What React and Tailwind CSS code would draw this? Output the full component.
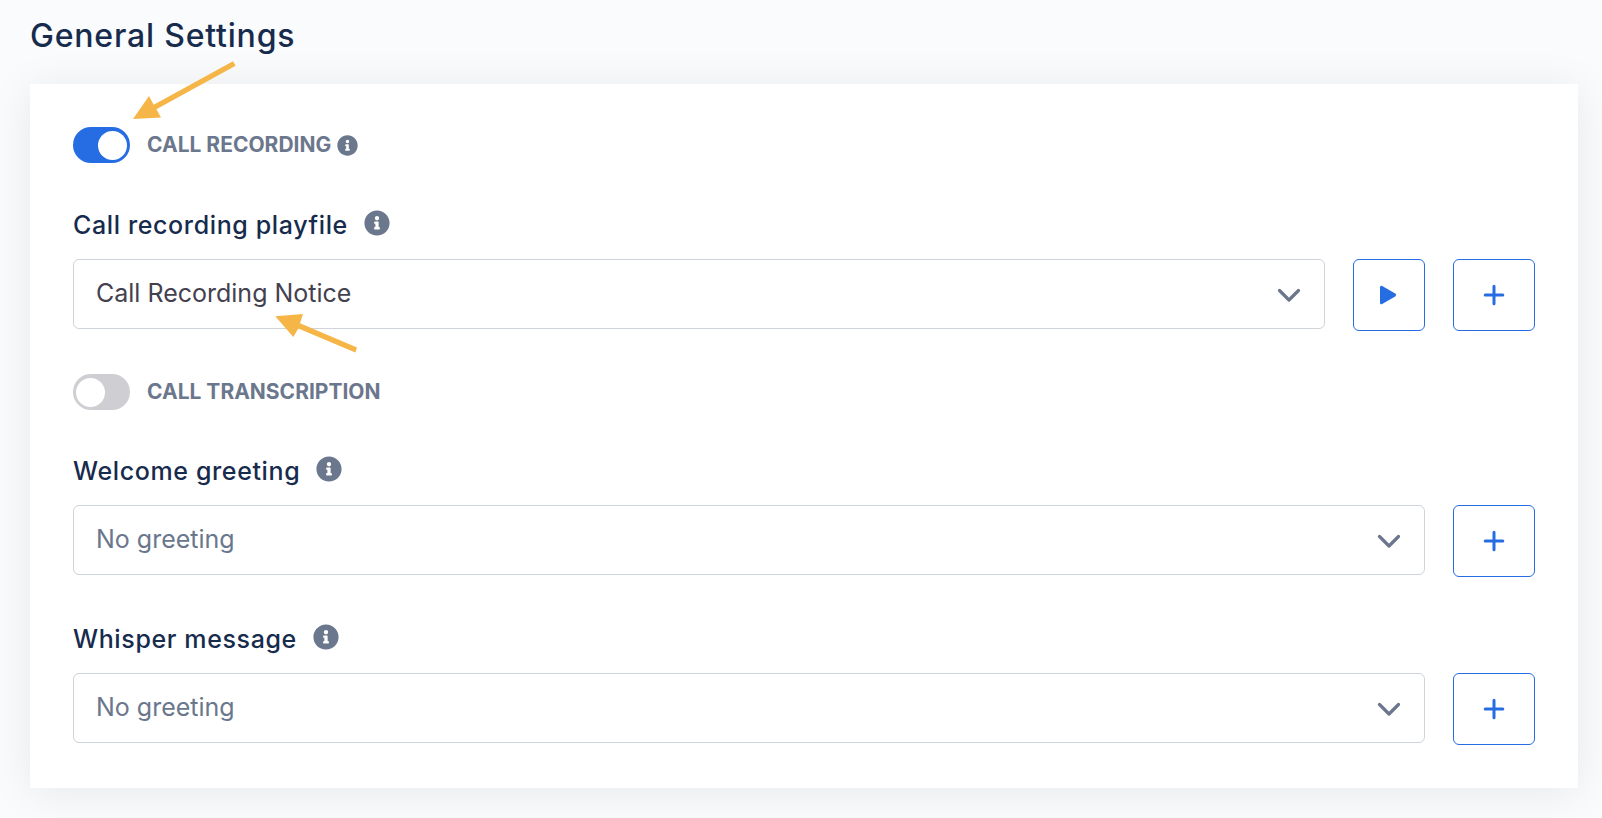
import React, { useState } from "react"
import { FaInfoCircle } from "react-icons/fa"

const Toggle = ({ id, checked, onChange }) => (
  <span className="relative block w-[57px] h-9 shrink-0">
    <input
      id={id}
      type="checkbox"
      role="switch"
      checked={checked}
      onChange={(e) => onChange(e.target.checked)}
      className="peer appearance-none block w-full h-full rounded-full bg-[#cfced3] checked:bg-[#266ce2] transition-colors cursor-pointer"
    />
    <span className="absolute top-1 left-[3px] w-[29px] h-[29px] rounded-full bg-white pointer-events-none transition-transform peer-checked:translate-x-[22px]" />
  </span>
)

const PlusIcon = () => (
  <svg className="w-6 h-6" viewBox="0 0 24 24" fill="none" stroke="currentColor" strokeWidth="3" strokeLinecap="round">
    <path d="M12 3.2v17.600M3.200 12h17.600" />
  </svg>
)

const PlayIcon = () => (
  <svg className="w-6 h-6" viewBox="0 0 24 24" fill="currentColor">
    <path d="M3 4.2v15.6c0 1.2 1.2 1.9 2.2 1.3l13-7.7c1.1-.6 1.1-2.2 0-2.8l-13-7.7C4.200 2.300 3 3 3 4.200z" />
  </svg>
)

const IconButton = ({ label, className, children }) => (
  <button
    type="button"
    aria-label={label}
    className={`h-[72px] shrink-0 flex items-center justify-center rounded-md border border-[#266ce2] text-[#266ce2] bg-white hover:bg-blue-50 transition-colors ${className}`}
  >
    {children}
  </button>
)

const Field = ({ id, label, options, muted, playable, className }) => {
  const [value, setValue] = useState(options[0])

  return (
    <div className={className}>
      <div className="flex items-start gap-4 mb-[18px]">
        <label htmlFor={id} className="text-[25px] leading-8 font-medium tracking-wide text-[#172b4d]">
          {label}
        </label>
        <FaInfoCircle className="w-[26px] h-[26px] mt-px text-[#6b778c]" />
      </div>
      <div className="flex items-start gap-7">
        <div className="relative flex-1">
          <select
            id={id}
            value={value}
            onChange={(e) => setValue(e.target.value)}
            className={`appearance-none block w-full h-[70px] pl-[22px] pr-16 rounded-md border border-[#ced4da] bg-white text-[25px] focus:outline-none focus:border-[#266ce2] ${
              muted ? "text-[#6b778c]" : "text-[#44414f]"
            }`}
          >
            {options.map((option) => (
              <option key={option}>{option}</option>
            ))}
          </select>
          <svg
            className="absolute right-6 top-6 w-6 h-6 text-[#6b778c] pointer-events-none"
            viewBox="0 0 24 24"
            fill="none"
            stroke="currentColor"
            strokeWidth="3.2"
            strokeLinecap="round"
            strokeLinejoin="round"
          >
            <path d="M2.500 7.500l9.500 9.500 9.500-9.500" />
          </svg>
        </div>
        {playable && (
          <IconButton label="Play" className="w-[72px]">
            <PlayIcon />
          </IconButton>
        )}
        <IconButton label="Add" className="w-[82px]">
          <PlusIcon />
        </IconButton>
      </div>
    </div>
  )
}

const App = () => {
  const [recording, setRecording] = useState(true)
  const [transcription, setTranscription] = useState(false)

  return (
    <main className="relative min-h-screen bg-[#fafbfd] pl-[30px] pr-6 pt-4 pb-[30px] font-['Inter',sans-serif]">
      <h1 className="text-[32px] leading-10 font-medium tracking-wide text-[#172b4d] mb-7">General Settings</h1>

      <section className="bg-white px-[43px] py-[43px] shadow-[0_4px_40px_rgba(0,0,0,0.08)]">
        {/* Call recording */}
        <div className="flex items-center mb-[46px]">
          <Toggle id="recording" checked={recording} onChange={setRecording} />
          <label htmlFor="recording" className="ml-[17px] mr-1.5 text-[21px] leading-8 font-bold text-[#6b778c]">
            CALL RECORDING
          </label>
          <FaInfoCircle className="w-[21px] h-[21px] text-[#6b778c]" />
        </div>
        <Field
          id="playfile"
          label="Call recording playfile"
          options={["Call Recording Notice"]}
          playable
          className="mb-[43px]"
        />

        {/* Call transcription */}
        <div className="flex items-center mb-[45px]">
          <Toggle id="transcription" checked={transcription} onChange={setTranscription} />
          <label htmlFor="transcription" className="ml-[17px] text-[21px] leading-8 font-bold text-[#6b778c]">
            CALL TRANSCRIPTION
          </label>
        </div>
        <Field id="welcome" label="Welcome greeting" options={["No greeting"]} muted className="mb-[46px]" />
        <Field id="whisper" label="Whisper message" options={["No greeting"]} muted />
      </section>

      {/* Pointer arrows */}
      <svg className="absolute left-0 top-0 w-[400px] h-[360px] pointer-events-none" viewBox="0 0 400 360" fill="#f5b547">
        <path d="M233 61.300L235.600 65.700 156.400 109.200 161 117.600 133 119 149 96 153.700 104.700z" />
        <path d="M275.300 316.200L303 314 300 323.300 357 347.500 355.300 352.600 298.300 328.600 293.300 337z" />
      </svg>
    </main>
  )
}

export default App
